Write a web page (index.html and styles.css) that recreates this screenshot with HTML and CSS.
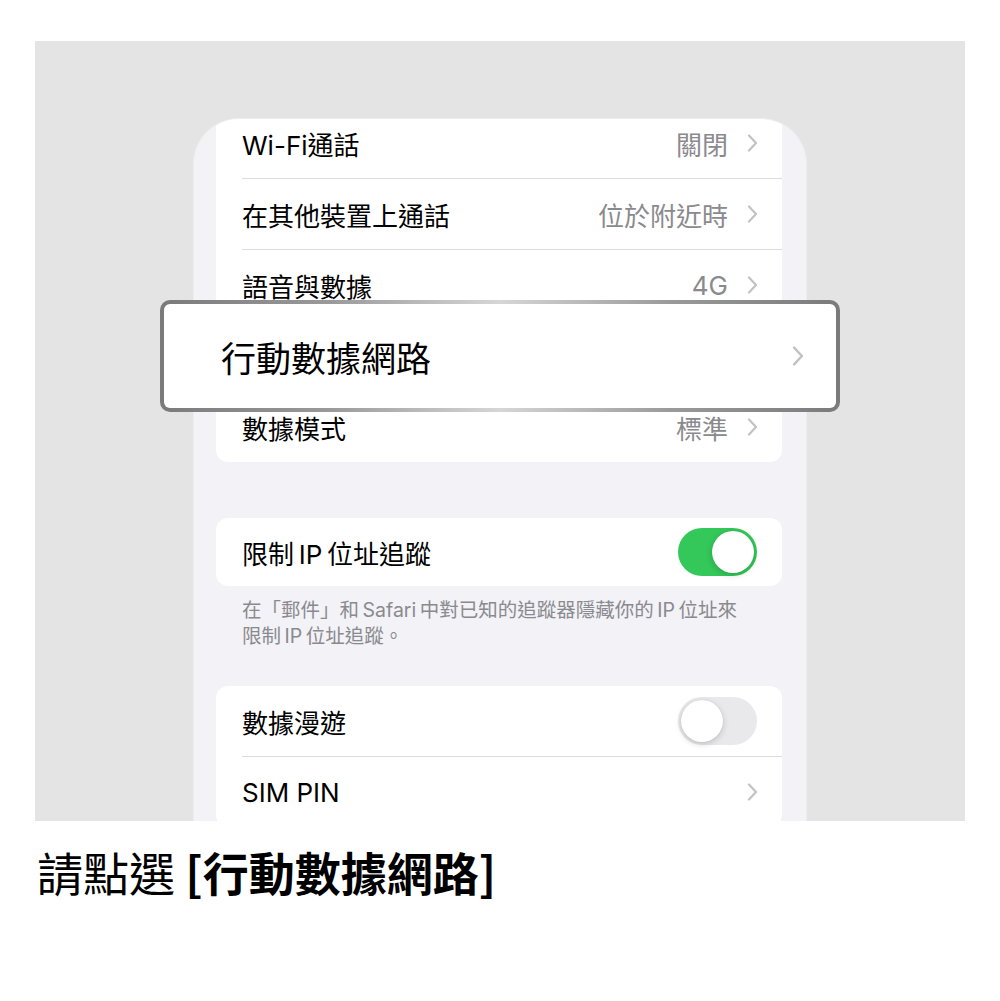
FILE: index.html
```html
<!DOCTYPE html>
<html lang="zh-Hant">
<head>
    <meta charset="UTF-8">
    <meta name="viewport" content="width=device-width, initial-scale=1.0">
    <title>行動數據網路</title>
    <link rel="stylesheet" href="styles.css">
</head>
<body>
    <div class="stage">
        <div class="phone">
            <div class="group group-top">
                <div class="row">
                    <span class="label">Wi-Fi通話</span>
                    <span class="value">關閉</span>
                    <svg class="chevron" viewBox="0 0 10 18"><path d="M1.5 1.5 L8.5 9 L1.5 16.5"/></svg>
                </div>
                <div class="row">
                    <span class="label">在其他裝置上通話</span>
                    <span class="value">位於附近時</span>
                    <svg class="chevron" viewBox="0 0 10 18"><path d="M1.5 1.5 L8.5 9 L1.5 16.5"/></svg>
                </div>
                <div class="row">
                    <span class="label">語音與數據</span>
                    <span class="value">4G</span>
                    <svg class="chevron" viewBox="0 0 10 18"><path d="M1.5 1.5 L8.5 9 L1.5 16.5"/></svg>
                </div>
                <!-- row sits under the callout -->
                <div class="row row-covered">
                    <span class="label">行動數據網路</span>
                    <span class="value"></span>
                    <svg class="chevron" viewBox="0 0 10 18"><path d="M1.5 1.5 L8.5 9 L1.5 16.5"/></svg>
                </div>
                <div class="row">
                    <span class="label">數據模式</span>
                    <span class="value">標準</span>
                    <svg class="chevron" viewBox="0 0 10 18"><path d="M1.5 1.5 L8.5 9 L1.5 16.5"/></svg>
                </div>
            </div>

            <div class="group">
                <div class="row row-short">
                    <span class="label">限制&#8201;IP&#8201;位址追蹤</span>
                    <span class="toggle on"><span class="knob"></span></span>
                </div>
            </div>
            <p class="footnote">在「郵件」和&#8201;Safari&#8201;中對已知的追蹤器隱藏你的&#8201;IP&#8201;位址來<br>限制&#8201;IP&#8201;位址追蹤。</p>

            <div class="group">
                <div class="row">
                    <span class="label">數據漫遊</span>
                    <span class="toggle"><span class="knob"></span></span>
                </div>
                <div class="row">
                    <span class="label">SIM PIN</span>
                    <span class="value"></span>
                    <svg class="chevron" viewBox="0 0 10 18"><path d="M1.5 1.5 L8.5 9 L1.5 16.5"/></svg>
                </div>
            </div>
        </div>

        <!-- enlarged callout over the 行動數據網路 row -->
        <div class="callout">
            <span class="callout-label">行動數據網路</span>
            <svg class="chevron" viewBox="0 0 10 18"><path d="M1.5 1.5 L8.5 9 L1.5 16.5"/></svg>
        </div>
    </div>

    <h2 class="caption">請點選 <b>[行動數據網路]</b></h2>
</body>
</html>
```

FILE: styles.css
```css
body {
    margin: 0;
    background: #fff;
    font-family: "Inter", "Noto Sans CJK TC", sans-serif;
    color: #000;
}
.stage {
    position: relative;
    margin: 41px 0 0 35px;
    width: 930px;
    height: 780px;
    background: #e4e4e4;
    overflow: hidden;
}
.phone {
    margin: 77px 0 0 158px;
    width: 614px;
    height: 720px;
    box-sizing: border-box;
    padding: 0 24px 0 22px;
    background: #f2f2f7;
    border: 1px solid #ededed;
    border-bottom: none;
    border-radius: 46px 46px 0 0;
    overflow: hidden;
}
.group {
    background: #fff;
    border-radius: 12px;
    margin-top: 56px;
}
.group-top {
    margin-top: -11px;
}
.row {
    display: flex;
    align-items: center;
    height: 70px;
    margin-left: 26px;
    padding-right: 24px;
    border-bottom: 1px solid #dcdcdf;
    font-size: 26px;
}
.row:last-child {
    border-bottom: none;
}
.row-short {
    height: 68px;
}
.row-covered .label {
    visibility: hidden;
}
.label {
    flex: 1;
}
.value {
    color: #8a8a8e;
    margin-right: 19px;
}
.chevron {
    width: 11px;
    height: 18px;
    fill: none;
    stroke: #c2c2c5;
    stroke-width: 2.2;
    stroke-linecap: round;
    stroke-linejoin: round;
}
.toggle {
    position: relative;
    width: 79px;
    height: 48px;
    margin-right: 1px;
    border-radius: 24px;
    background: #e9e9eb;
}
.toggle .knob {
    position: absolute;
    top: 3px;
    left: 3px;
    width: 42px;
    height: 42px;
    border-radius: 50%;
    background: #fff;
    box-shadow: 0 2px 6px rgba(0, 0, 0, 0.18), 0 0 1px rgba(0, 0, 0, 0.1);
}
.toggle.on {
    background: #34c759;
}
.toggle.on .knob {
    left: 34px;
}
.footnote {
    margin: 11px 0 0 26px;
    font-size: 19.5px;
    line-height: 26px;
    color: #8a8a8e;
}
.footnote + .group {
    margin-top: 37px;
}
.callout {
    position: absolute;
    left: 125px;
    top: 259px;
    width: 680px;
    height: 112px;
    box-sizing: border-box;
    display: flex;
    align-items: center;
    padding: 0 32px 0 57px;
    background: #fff;
    border: 4px solid transparent;
    border-radius: 10px;
    background-image: linear-gradient(#fff, #fff),
        linear-gradient(90deg, #7a7a7a 0%, #9a9a9a 25%, #d6d6d6 50%, #9a9a9a 75%, #7a7a7a 100%);
    background-origin: border-box;
    background-clip: padding-box, border-box;
}
.callout-label {
    flex: 1;
    font-size: 35px;
}
.callout .chevron {
    width: 12px;
    height: 20px;
}
.caption {
    margin: 21px 0 0 37px;
    font-family: "Noto Sans CJK TC", sans-serif;
    font-size: 46px;
    font-weight: 400;
    line-height: 1.3;
}
.caption b {
    font-weight: 700;
}
```
